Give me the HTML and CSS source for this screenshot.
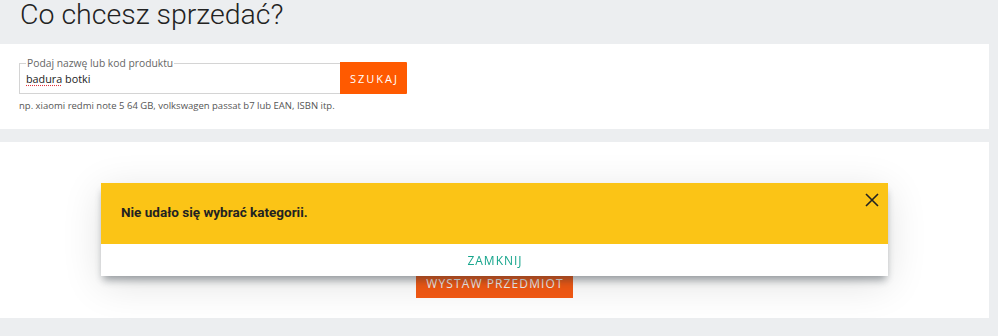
FILE: index.html
```html
<!DOCTYPE html>
<html lang="pl">
<head>
<meta charset="utf-8">
<title>Co chcesz sprzedać?</title>
<link rel="stylesheet" href="styles.css">
</head>
<body>
<div class="page">
  <h1 class="title">Co chcesz sprzedać?</h1>
  <section class="card card-search">
    <div class="search-row">
      <fieldset class="field">
        <legend class="field-label">Podaj nazwę lub kod produktu</legend>
        <div class="field-value"><span class="misspelled">badura</span> botki</div>
      </fieldset>
      <button class="btn btn-search">SZUKAJ</button>
    </div>
    <p class="hint">np. xiaomi redmi note 5 64 GB, volkswagen passat b7 lub EAN, ISBN itp.</p>
  </section>
  <section class="card card-result">
    <button class="btn btn-list">WYSTAW PRZEDMIOT</button>
  </section>
</div>
<div class="dialog" role="alertdialog">
  <div class="dialog-head">
    <p class="dialog-msg">Nie udało się wybrać kategorii.</p>
    <svg class="dialog-x" width="14" height="14" viewBox="0 0 14 14" aria-hidden="true">
      <path d="M1 1 L13 13 M13 1 L1 13" stroke="#222" stroke-width="1.6" fill="none"/>
    </svg>
  </div>
  <div class="dialog-foot">
    <span class="dialog-close">ZAMKNIJ</span>
  </div>
</div>
</body>
</html>
```
FILE: styles.css
```css
* { box-sizing: border-box; }
html, body { margin: 0; padding: 0; }
body {
  background: #eceef0;
  font-family: "Open Sans", "Liberation Sans", sans-serif;
  color: #222;
  width: 998px;
  height: 336px;
  overflow: hidden;
}
.page {
  padding-right: 9px;
}
.title {
  margin: 0 0 14px 20px;
  font-family: Roboto, "Liberation Sans", sans-serif;
  font-weight: 300;
  font-size: 28.5px;
  line-height: 30px;
  color: #222;
}
.card {
  background: #fff;
}
.card-search {
  height: 85px;
  padding: 12px 19px 0;
}
.search-row {
  display: flex;
  align-items: flex-end;
}
.field {
  margin: 0;
  width: 321px;
  padding: 0 6px 6px;
  border: 1px solid #d4d4d4;
  border-right: 0;
  min-width: 0;
}
.field-label {
  padding: 0 1px;
  font-size: 10.3px;
  line-height: 14px;
  color: #666;
}
.field-value {
  font-size: 10.8px;
  line-height: 17px;
  color: #222;
}
.misspelled {
  text-decoration: underline dotted #e0303a;
  text-underline-offset: 2px;
}
.btn {
  border: 0;
  font-family: "Open Sans", "Liberation Sans", sans-serif;
  color: #fff;
  background: #ff5a00;
  cursor: pointer;
}
.btn-search {
  width: 67px;
  height: 32px;
  font-size: 11px;
  letter-spacing: 2px;
  padding: 0 0 0 2px;
  border-radius: 0 1px 1px 0;
}
.hint {
  margin: 5px 0 0;
  font-size: 9.5px;
  line-height: 14px;
  color: #555;
}
.card-result {
  margin-top: 13px;
  height: 176px;
  display: flex;
  flex-direction: column;
  justify-content: flex-end;
  align-items: center;
  padding-bottom: 20px;
}
.btn-list {
  width: 157px;
  height: 32px;
  font-size: 12px;
  letter-spacing: 1.1px;
  background: #f55a14;
  color: #f4f4f4;
  padding: 2px 0 0 1px;
}
.dialog {
  position: fixed;
  top: 183px;
  left: 101px;
  width: 787px;
  background: #fff;
  box-shadow: 0 6px 8px -2px rgba(40, 50, 60, 0.45), 0 8px 40px rgba(0, 0, 0, 0.12);
}
.dialog-head {
  height: 61px;
  background: #fbc416;
  display: flex;
  align-items: flex-start;
  justify-content: space-between;
  padding: 9px 9px 0 20px;
}
.dialog-msg {
  margin: 12px 0 0;
  font-family: Roboto, "Liberation Sans", sans-serif;
  font-weight: 700;
  font-size: 13.5px;
  line-height: 16px;
  color: #222;
}
.dialog-x {
  display: block;
  margin-top: 1px;
}
.dialog-foot {
  height: 32px;
  display: flex;
  align-items: center;
  justify-content: center;
}
.dialog-close {
  font-size: 12px;
  letter-spacing: 1px;
  color: #16a58c;
  padding-left: 1px;
}
```
